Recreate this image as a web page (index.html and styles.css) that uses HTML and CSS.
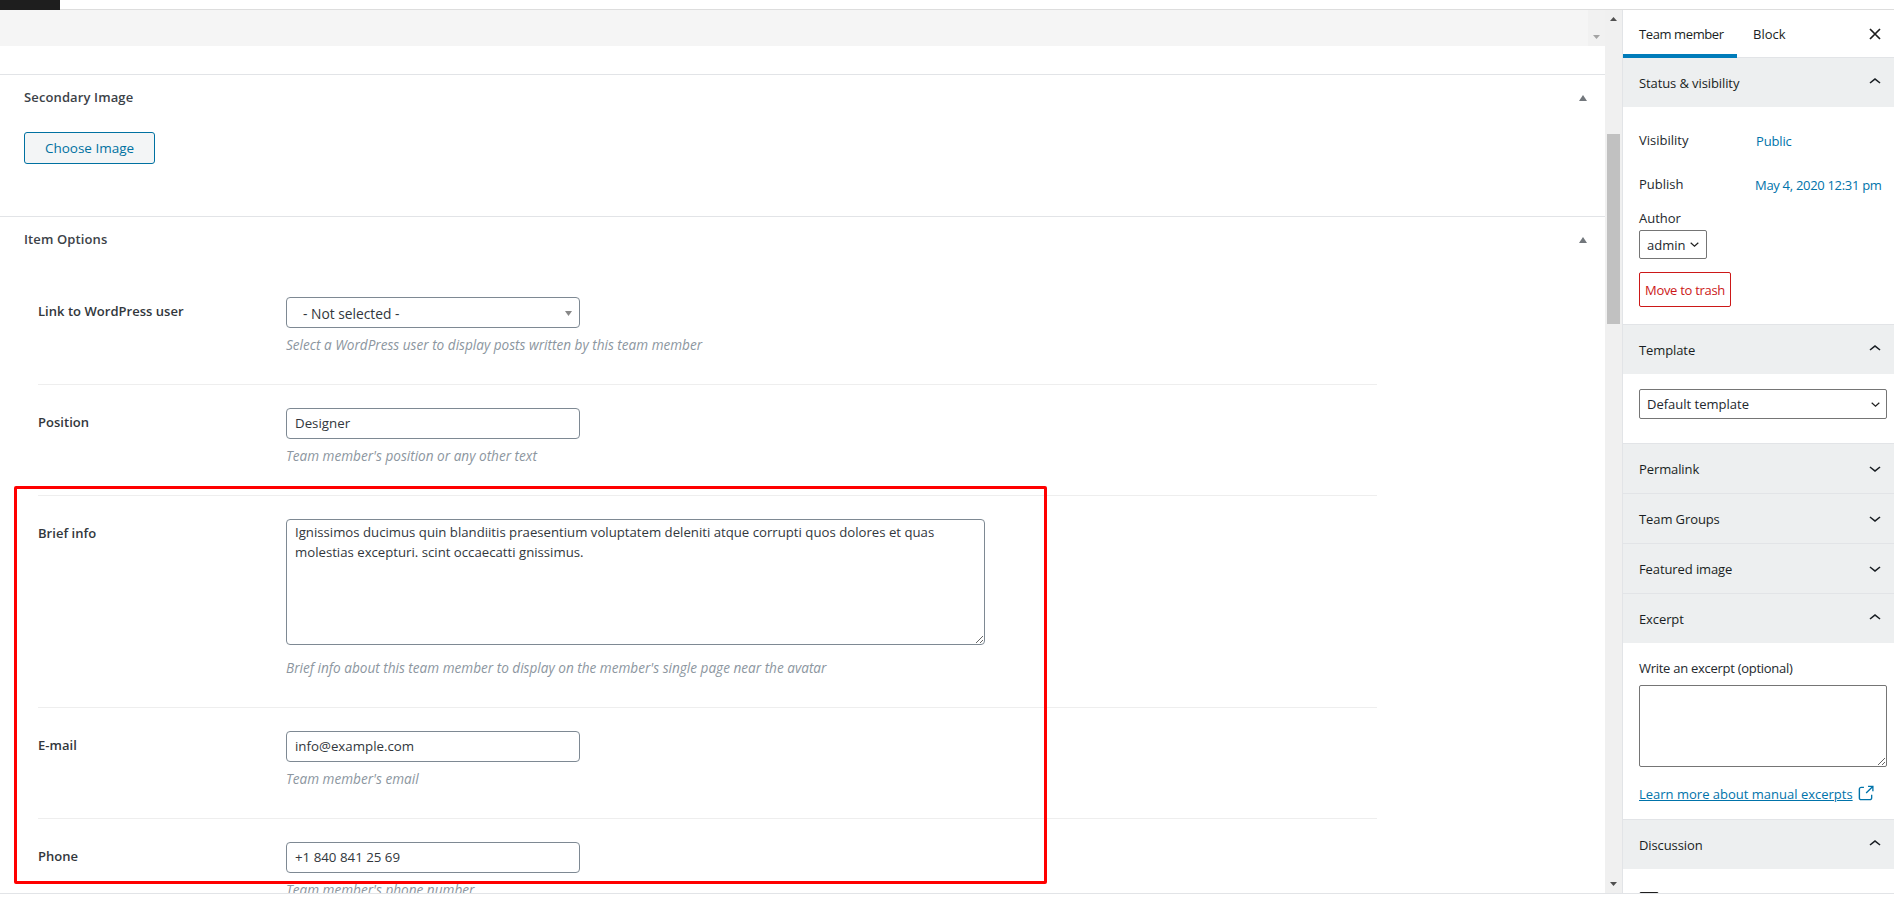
FILE: index.html
```html
<!DOCTYPE html>
<html lang="en">
<head>
<meta charset="utf-8">
<title>Edit Team member</title>
<link rel="stylesheet" href="styles.css">
</head>
<body>
<div class="page">
  <div class="topstrip"><div class="topblock"></div></div>
  <div class="workspace">
    <main class="content">
      <div class="band">
        <div class="band-scroll">
          <svg class="tri" width="7" height="4" viewBox="0 0 7 4"><path d="M0 0h7L3.5 4z" fill="#a3a3a3"/></svg>
        </div>
      </div>
      <div class="band-gap"></div>

      <section class="metabox">
        <header class="metabox-head">
          <h2>Secondary Image</h2>
          <svg width="8" height="6" viewBox="0 0 8 6"><path d="M4 0l4 6H0z" fill="#72777c"/></svg>
        </header>
        <div class="secondary-body"><button class="choose" type="button">Choose Image</button></div>
      </section>

      <section class="metabox">
        <header class="metabox-head">
          <h2>Item Options</h2>
          <svg width="8" height="6" viewBox="0 0 8 6"><path d="M4 0l4 6H0z" fill="#72777c"/></svg>
        </header>
        <div class="rows">
          <div class="row">
            <label class="row-label">Link to WordPress user</label>
            <div>
              <div class="fake-select"><span>- Not selected -</span><svg width="7" height="5" viewBox="0 0 7 5"><path d="M0 0h7L3.5 5z" fill="#888"/></svg></div>
              <p class="hint">Select a WordPress user to display posts written by this team member</p>
            </div>
          </div>
          <div class="row">
            <label class="row-label">Position</label>
            <div>
              <input class="field" type="text" value="Designer">
              <p class="hint">Team member's position or any other text</p>
            </div>
          </div>
          <div class="row">
            <label class="row-label">Brief info</label>
            <div>
              <textarea class="area">Ignissimos ducimus quin blandiitis praesentium voluptatem deleniti atque corrupti quos dolores et quas molestias excepturi. scint occaecatti gnissimus.</textarea>
              <p class="hint hint-area">Brief info about this team member to display on the member's single page near the avatar</p>
            </div>
          </div>
          <div class="row">
            <label class="row-label">E-mail</label>
            <div>
              <input class="field" type="text" value="info@example.com">
              <p class="hint">Team member's email</p>
            </div>
          </div>
          <div class="row">
            <label class="row-label">Phone</label>
            <div>
              <input class="field" type="text" value="+1 840 841 25 69">
              <p class="hint">Team member's phone number</p>
            </div>
          </div>
        </div>
      </section>
    </main>

    <div class="scrollbar">
      <svg class="sb-up" width="7" height="4" viewBox="0 0 7 4"><path d="M3.5 0L7 4H0z" fill="#505050"/></svg>
      <div class="sb-thumb"></div>
      <svg class="sb-down" width="7" height="4" viewBox="0 0 7 4"><path d="M0 0h7L3.5 4z" fill="#505050"/></svg>
    </div>

    <aside class="sidebar">
      <div class="tabs">
        <div class="tab tab-active">Team member</div>
        <div class="tab">Block</div>
        <svg class="close" width="24" height="24" viewBox="0 0 24 24"><path d="M7 7l10 10M17 7L7 17" stroke="#1e1e1e" stroke-width="1.7" fill="none"/></svg>
      </div>

      <section class="panel">
        <header class="panel-head"><span>Status &amp; visibility</span><svg width="24" height="24" viewBox="0 0 24 24"><path d="M6.5 12.4L12 8l5.5 4.4-.9 1.2L12 10l-4.5 3.6-1-1.2z"/></svg></header>
        <div class="status-body">
          <div class="status-row"><span class="status-key">Visibility</span><a class="status-val">Public</a></div>
          <div class="status-row status-row-2"><span class="status-key">Publish</span><a class="status-val status-date">May 4, 2020 12:31 pm</a></div>
          <div class="author-label">Author</div>
          <div class="mini-select author-select"><span>admin</span><svg width="9" height="5" viewBox="0 0 9 5"><path d="M.7.7l3.8 3.4L8.3.7" fill="none" stroke="#1e1e1e" stroke-width="1.2"/></svg></div>
          <button class="trash" type="button">Move to trash</button>
        </div>
      </section>

      <section class="panel">
        <header class="panel-head"><span>Template</span><svg width="24" height="24" viewBox="0 0 24 24"><path d="M6.5 12.4L12 8l5.5 4.4-.9 1.2L12 10l-4.5 3.6-1-1.2z"/></svg></header>
        <div class="template-body">
          <div class="mini-select template-select"><span>Default template</span><svg width="9" height="5" viewBox="0 0 9 5"><path d="M.7.7l3.8 3.4L8.3.7" fill="none" stroke="#1e1e1e" stroke-width="1.2"/></svg></div>
        </div>
      </section>

      <section class="panel">
        <header class="panel-head"><span>Permalink</span><svg width="24" height="24" viewBox="0 0 24 24"><path d="M17.5 11.6L12 16l-5.5-4.4.9-1.2L12 14l4.5-3.6 1 1.2z"/></svg></header>
      </section>
      <section class="panel">
        <header class="panel-head"><span>Team Groups</span><svg width="24" height="24" viewBox="0 0 24 24"><path d="M17.5 11.6L12 16l-5.5-4.4.9-1.2L12 14l4.5-3.6 1 1.2z"/></svg></header>
      </section>
      <section class="panel">
        <header class="panel-head"><span>Featured image</span><svg width="24" height="24" viewBox="0 0 24 24"><path d="M17.5 11.6L12 16l-5.5-4.4.9-1.2L12 14l4.5-3.6 1 1.2z"/></svg></header>
      </section>

      <section class="panel">
        <header class="panel-head"><span>Excerpt</span><svg width="24" height="24" viewBox="0 0 24 24"><path d="M6.5 12.4L12 8l5.5 4.4-.9 1.2L12 10l-4.5 3.6-1-1.2z"/></svg></header>
        <div class="excerpt-body">
          <label class="excerpt-label">Write an excerpt (optional)</label>
          <textarea class="excerpt-area"></textarea>
          <div class="excerpt-link"><a>Learn more about manual excerpts</a><svg width="21" height="21" viewBox="0 0 24 24"><path d="M18.2 17c0 .7-.6 1.2-1.2 1.2H7c-.7 0-1.2-.6-1.2-1.2V7c0-.7.6-1.2 1.2-1.2h3.2V4.2H7C5.5 4.2 4.2 5.5 4.2 7v10c0 1.5 1.2 2.8 2.8 2.8h10c1.5 0 2.8-1.2 2.8-2.8v-3.6h-1.5V17zM14.9 3v1.5h3.7l-6.4 6.4 1.1 1.1 6.4-6.4v3.7h1.5V3h-6.3z" fill="#0073aa"/></svg></div>
        </div>
      </section>

      <section class="panel panel-last">
        <header class="panel-head"><span>Discussion</span><svg width="24" height="24" viewBox="0 0 24 24"><path d="M6.5 12.4L12 8l5.5 4.4-.9 1.2L12 10l-4.5 3.6-1-1.2z"/></svg></header>
        <div class="discussion-body"><div class="check"></div></div>
      </section>
    </aside>
  </div>
  <div class="bottomstrip"></div>
  <div class="highlight"></div>
</div>
</body>
</html>
```
FILE: styles.css
```css
* { box-sizing: border-box; }
html, body { margin: 0; padding: 0; height: 100%; overflow: hidden; background: #fff; }
body { font-family: "Open Sans", "Noto Sans", sans-serif; font-size: 13px; line-height: 20px; color: #32373c; }
h2, p { margin: 0; }
svg { display: block; flex: none; }

.page { position: relative; width: 1894px; height: 899px; display: flex; flex-direction: column; }
.topstrip { height: 10px; border-bottom: 1px solid #ddd; flex: none; }
.topblock { width: 60px; height: 10px; background: #1e1e1e; }
.workspace { height: 883px; display: flex; flex: none; overflow: hidden; }
.bottomstrip { height: 6px; border-top: 1px solid #e2e4e7; flex: none; }

.content { flex: 1; min-width: 0; overflow: hidden; }
.band { height: 36px; background: #f5f5f5; display: flex; justify-content: flex-end; }
.band-scroll { width: 17px; background: #f1f1f1; padding: 25px 0 0 5px; }
.band-gap { height: 28px; }

.metabox { border-top: 1px solid #e2e4e7; }
.metabox-head { height: 44px; padding: 0 18px 0 24px; display: flex; align-items: center; justify-content: space-between; }
.metabox-head svg { margin-top: 2px; }
.metabox-head h2 { font-size: 13px; font-weight: 600; letter-spacing: .12px; color: #3c4248; line-height: 20px; }
.secondary-body { padding: 13px 24px 52px; }
.choose { display: block; width: 131px; height: 32px; padding: 0; font: inherit; font-size: 13.5px; color: #0071a1; background: #f3f5f6; border: 1px solid #0071a1; border-radius: 3px; }

.rows { padding: 13px 228px 0 38px; }
.row { display: grid; grid-template-columns: 248px 1fr; padding: 23px 0 29px; border-bottom: 1px solid #eeeeee; }
.row-label { padding-top: 4px; font-weight: 600; letter-spacing: .03px; color: #32373c; }
.field { display: block; width: 294px; height: 31px; padding: 0 8px 2px; font: inherit; font-size: 13.3px; color: #32373c; background: #fff; border: 1px solid #7e8993; border-radius: 4px; outline: none; }
.fake-select { width: 294px; height: 31px; padding: 2px 7px 0 16px; display: flex; align-items: center; justify-content: space-between; font-size: 13.8px; color: #32373c; border: 1px solid #7e8993; border-radius: 4px; }
.area { display: block; width: 699px; height: 126px; padding: 2px 8px; font: inherit; font-size: 13.2px; color: #32373c; background: #fff; border: 1px solid #7e8993; border-radius: 4px; outline: none; }
.hint { margin-top: 7px; font-style: italic; font-size: 13.6px; color: #8c96a0; }
.hint-area { margin-top: 13px; }

.scrollbar { width: 17px; flex: none; background: #f0f0f0; display: flex; flex-direction: column; align-items: center; }
.sb-up { margin-top: 7px; }
.sb-thumb { width: 13px; height: 190px; margin-top: 113px; background: #c1c1c1; }
.sb-down { margin-top: auto; margin-bottom: 7px; }

.sidebar { width: 272px; flex: none; border-left: 1px solid #e2e4e7; background: #fff; overflow: hidden; color: #23282d; white-space: nowrap; }
.tabs { height: 48px; display: flex; border-bottom: 1px solid #e2e4e7; }
.tab { height: 48px; padding: 4px 15px; display: flex; align-items: center; color: #191e23; }
.tab-active { width: 114px; border-bottom: 4px solid #007cba; padding-bottom: 0; padding-left: 16px; letter-spacing: -.4px; }
.tab + .tab { padding-left: 16px; }
.close { margin: 12px 7px 0 auto; }

.panel { border-bottom: 1px solid #e2e4e7; }
.panel-last { border-bottom: 0; }
.panel-head { height: 49px; padding: 0 7px 0 16px; display: flex; align-items: center; justify-content: space-between; background: #edeff0; color: #191e23; font-weight: 500; letter-spacing: -.1px; }
.panel-head svg { fill: #191e23; margin-top: -1px; }

.status-body { padding: 23px 16px 17px; }
.status-row { display: flex; }
.status-row-2 { margin-top: 24px; }
.status-key { width: 118px; flex: none; }
.status-val { color: #0073aa; position: relative; top: 1px; left: -1px; letter-spacing: -.15px; }
.status-date { left: -2px; letter-spacing: -.3px; }
.author-label { margin-top: 14px; }
.mini-select { height: 29px; display: flex; align-items: center; justify-content: space-between; padding: 0 7px; color: #23282d; border: 1px solid #757575; border-radius: 2px; margin-top: 2px; }
.author-select { width: 68px; }
.trash { display: block; width: 92px; height: 35px; margin-top: 13px; padding: 0; font: inherit; letter-spacing: -.3px; color: #cc1818; background: #fff; border: 1px solid #cc1818; border-radius: 2px; }

.template-body { padding: 15px 7px 24px 16px; }
.template-select { height: 30px; margin-top: 0; padding-right: 6px; }

.excerpt-body { padding: 15px 7px 15px 16px; }
.excerpt-label { display: block; letter-spacing: -.28px; }
.excerpt-area { display: block; width: 248px; height: 82px; margin-top: 7px; padding: 6px 8px; font: inherit; border: 1px solid #757575; border-radius: 2px; outline: none; }
.excerpt-link { margin-top: 16px; display: flex; align-items: center; gap: 2px; }
.excerpt-link a { color: #0073aa; text-decoration: underline; }

.discussion-body { padding: 23px 16px 0; }
.check { width: 20px; height: 20px; border: 1px solid #1e1e1e; border-radius: 2px; }

.highlight { position: absolute; left: 14px; top: 486px; width: 1033px; height: 398px; border: 3px solid #f00; border-radius: 2px; pointer-events: none; }
```
